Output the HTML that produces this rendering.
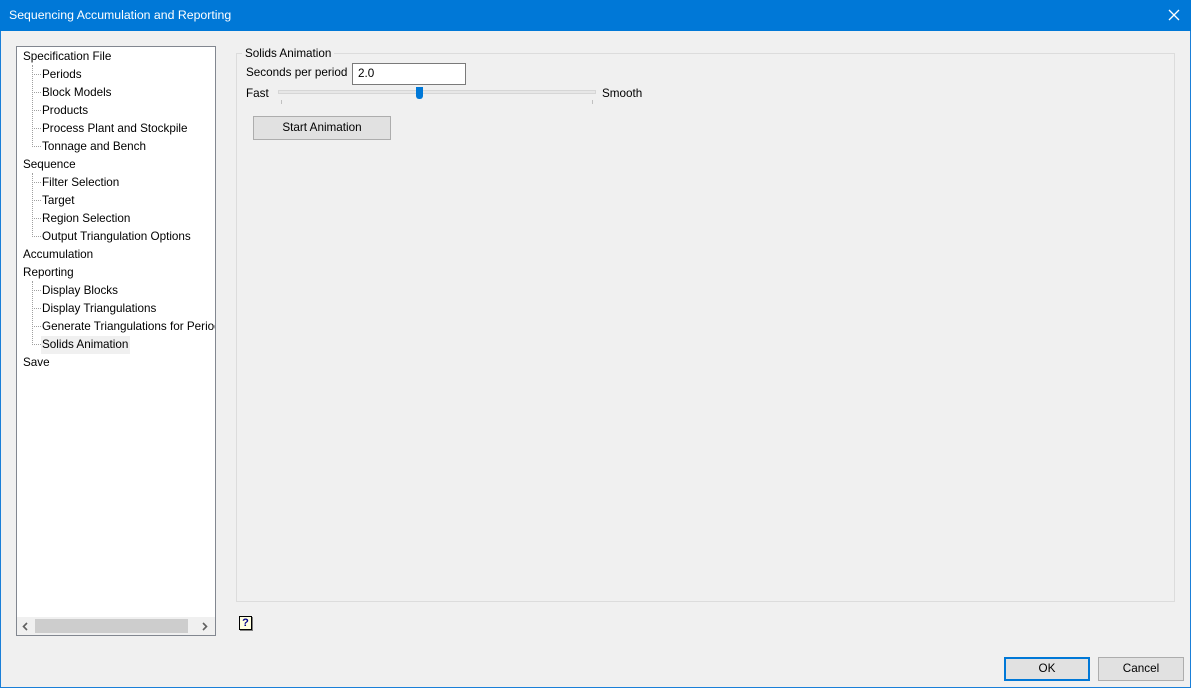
<!DOCTYPE html>
<html><head><style>
*{margin:0;padding:0;box-sizing:border-box}
body{width:1191px;height:688px;background:#f0f0f0;font-family:"Liberation Sans",sans-serif;font-size:11.7px;color:#000;position:relative;overflow:hidden}
.abs{position:absolute}
.frame{left:0;top:0;width:1191px;height:688px;border:1px solid #1a7fd8}
.title{left:0;top:0;width:1191px;height:31px;background:#0078d7;color:#fff;font-size:12.3px;line-height:31px;padding-left:9px}
.tree{left:16px;top:46px;width:200px;height:590px;background:#fff;border:1px solid #828790}
.it{position:absolute;left:6px;white-space:nowrap;line-height:18px;height:18px}
.ch{left:25px}
.vl{position:absolute;left:15px;border-left:1px dotted #a0a0a0;width:0}
.hl{position:absolute;left:15px;width:9px;border-top:1px dotted #a0a0a0}
.btn{background:#e1e1e1;border:1px solid #adadad;text-align:center}
</style></head><body>
<div class="abs frame"></div>
<div class="abs title">Sequencing Accumulation and Reporting</div>
<svg class="abs" style="left:1168px;top:9px" width="12" height="12"><path d="M1 1L11 11M11 1L1 11" stroke="#fff" stroke-width="1.3"/></svg>

<div class="abs tree">
<div class="vl" style="top:18px;height:82px"></div>
<div class="vl" style="top:126px;height:64px"></div>
<div class="vl" style="top:234px;height:64px"></div>
<div class="hl" style="top:27px"></div><div class="hl" style="top:45px"></div><div class="hl" style="top:63px"></div><div class="hl" style="top:81px"></div><div class="hl" style="top:99px"></div>
<div class="hl" style="top:135px"></div><div class="hl" style="top:153px"></div><div class="hl" style="top:171px"></div><div class="hl" style="top:189px"></div>
<div class="hl" style="top:243px"></div><div class="hl" style="top:261px"></div><div class="hl" style="top:279px"></div><div class="hl" style="top:297px"></div>
<div class="it" style="top:1px">Specification File</div>
<div class="it ch" style="top:19px">Periods</div>
<div class="it ch" style="top:37px">Block Models</div>
<div class="it ch" style="top:55px">Products</div>
<div class="it ch" style="top:73px">Process Plant and Stockpile</div>
<div class="it ch" style="top:91px">Tonnage and Bench</div>
<div class="it" style="top:109px">Sequence</div>
<div class="it ch" style="top:127px">Filter Selection</div>
<div class="it ch" style="top:145px">Target</div>
<div class="it ch" style="top:163px">Region Selection</div>
<div class="it ch" style="top:181px">Output Triangulation Options</div>
<div class="it" style="top:199px">Accumulation</div>
<div class="it" style="top:217px">Reporting</div>
<div class="it ch" style="top:235px">Display Blocks</div>
<div class="it ch" style="top:253px">Display Triangulations</div>
<div class="it ch" style="top:271px;width:173px;overflow:hidden">Generate Triangulations for Periods</div>
<div class="it ch" style="top:289px;background:#f0f0f0;left:24px;padding-left:1px;padding-right:2px">Solids Animation</div>
<div class="it" style="top:307px">Save</div>
<div class="abs" style="left:0;top:570px;width:198px;height:18px;background:#f0f0f0"></div>
<div class="abs" style="left:18px;top:572px;width:153px;height:14px;background:#cdcdcd"></div>
<svg class="abs" style="left:5px;top:575px" width="6" height="9"><path d="M5 1L1.5 4.5L5 8" stroke="#606060" stroke-width="1.6" fill="none"/></svg>
<svg class="abs" style="left:185px;top:575px" width="6" height="9"><path d="M1 1L4.5 4.5L1 8" stroke="#606060" stroke-width="1.6" fill="none"/></svg>
</div>

<div class="abs" style="left:236px;top:53px;width:939px;height:549px;border:1px solid #dcdcdc"></div>
<div class="abs" style="left:242px;top:46px;background:#f0f0f0;padding:0 3px;line-height:16px">Solids Animation</div>
<div class="abs" style="left:246px;top:66px">Seconds per period</div>
<div class="abs" style="left:352px;top:63px;width:114px;height:22px;background:#fff;border:1px solid #7a7a7a;padding:3px 0 0 5px">2.0</div>
<div class="abs" style="left:246px;top:87px">Fast</div>
<div class="abs" style="left:602px;top:87px">Smooth</div>
<div class="abs" style="left:278px;top:90px;width:318px;height:4px;background:#e7e7e7;border:1px solid #d6d6d6"></div>
<div class="abs" style="left:416px;top:87px;width:7px;height:12px;background:#0078d7;border-radius:0 0 3px 3px"></div>
<div class="abs" style="left:281px;top:100px;width:1px;height:4px;background:#c0c0c0"></div>
<div class="abs" style="left:592px;top:100px;width:1px;height:4px;background:#c0c0c0"></div>
<div class="abs btn" style="left:253px;top:116px;width:138px;height:24px;line-height:22px">Start Animation</div>

<div class="abs" style="left:239px;top:616px;width:13px;height:14px;background:#ffffe0;border:1px solid #000;box-shadow:1px 1px 0 #808080;color:#00008b;font-weight:bold;font-size:11px;line-height:12px;text-align:center">?</div>

<div class="abs btn" style="left:1004px;top:657px;width:86px;height:24px;line-height:20px;border:2px solid #0078d7">OK</div>
<div class="abs btn" style="left:1098px;top:657px;width:86px;height:24px;line-height:22px">Cancel</div>
</body></html>
